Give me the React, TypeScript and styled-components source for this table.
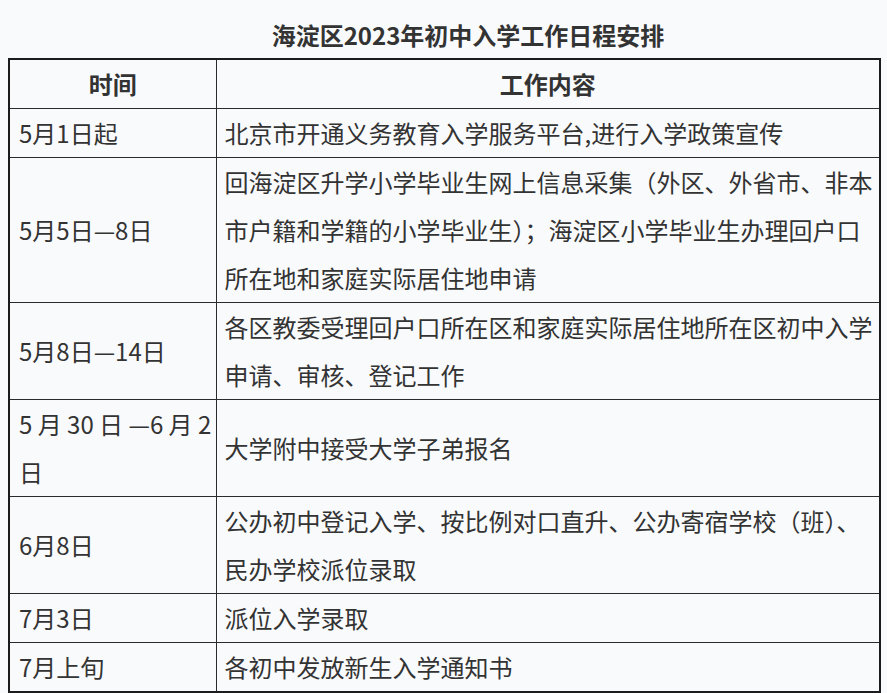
import React from 'react'
import styled, { createGlobalStyle } from 'styled-components'

const GlobalStyle = createGlobalStyle`
    html, body {
        margin: 0;
        padding: 0;
        background: #f9fafc;
    }
    body {
        font-family: "Noto Sans CJK SC", "Noto Sans", sans-serif;
        color: #333;
    }
`

const Page = styled.div`
    width: 887px;
    height: 693px;
    overflow: hidden;
    padding-left: 8px;
    box-sizing: border-box;
`

const Title = styled.h1`
    margin: 0;
    height: 58px;
    line-height: 70px;
    padding-left: 48px;
    font-size: 24px;
    font-weight: 700;
    text-align: center;
    color: #333;
    width: 872px;
    box-sizing: border-box;
`

const Table = styled.table`
    width: 873px;
    border-collapse: collapse;
    table-layout: fixed;
    border: 2px solid #1c1c1c;
`

const HeadCell = styled.th`
    font-size: 24px;
    font-weight: 700;
    line-height: 48px;
    text-align: center;
    border: 1px solid #2b2b2b;
    padding: 0 8px;
    color: #333;
`

const Cell = styled.td<{ $wide?: boolean }>`
    font-size: 24px;
    font-weight: 400;
    line-height: 48px;
    border: 1px solid #2b2b2b;
    padding: 0 ${p => (p.$wide ? '6px' : '1px')} 0 ${p => (p.$wide ? '8px' : '9px')};
    vertical-align: middle;
    text-align: left;
    color: #333;
    word-break: break-all;
`

const rows: [string, string][] = [
    ['5月1日起', '北京市开通义务教育入学服务平台,进行入学政策宣传'],
    ['5月5日—8日', '回海淀区升学小学毕业生网上信息采集（外区、外省市、非本市户籍和学籍的小学毕业生）；海淀区小学毕业生办理回户口所在地和家庭实际居住地申请'],
    ['5月8日—14日', '各区教委受理回户口所在区和家庭实际居住地所在区初中入学申请、审核、登记工作'],
    ['5 月 30 日 —6 月 2 日', '大学附中接受大学子弟报名'],
    ['6月8日', '公办初中登记入学、按比例对口直升、公办寄宿学校（班）、民办学校派位录取'],
    ['7月3日', '派位入学录取'],
    ['7月上旬', '各初中发放新生入学通知书'],
]

export default function App() {
    return (
        <Page>
            <GlobalStyle />
            <Title>海淀区2023年初中入学工作日程安排</Title>
            <Table>
                <colgroup>
                    <col style={{ width: '207px' }} />
                    <col />
                </colgroup>
                <thead>
                    <tr>
                        <HeadCell>时间</HeadCell>
                        <HeadCell>工作内容</HeadCell>
                    </tr>
                </thead>
                <tbody>
                    {rows.map(([time, work]) => (
                        <tr key={time}>
                            <Cell>{time}</Cell>
                            <Cell $wide>{work}</Cell>
                        </tr>
                    ))}
                </tbody>
            </Table>
        </Page>
    )
}
